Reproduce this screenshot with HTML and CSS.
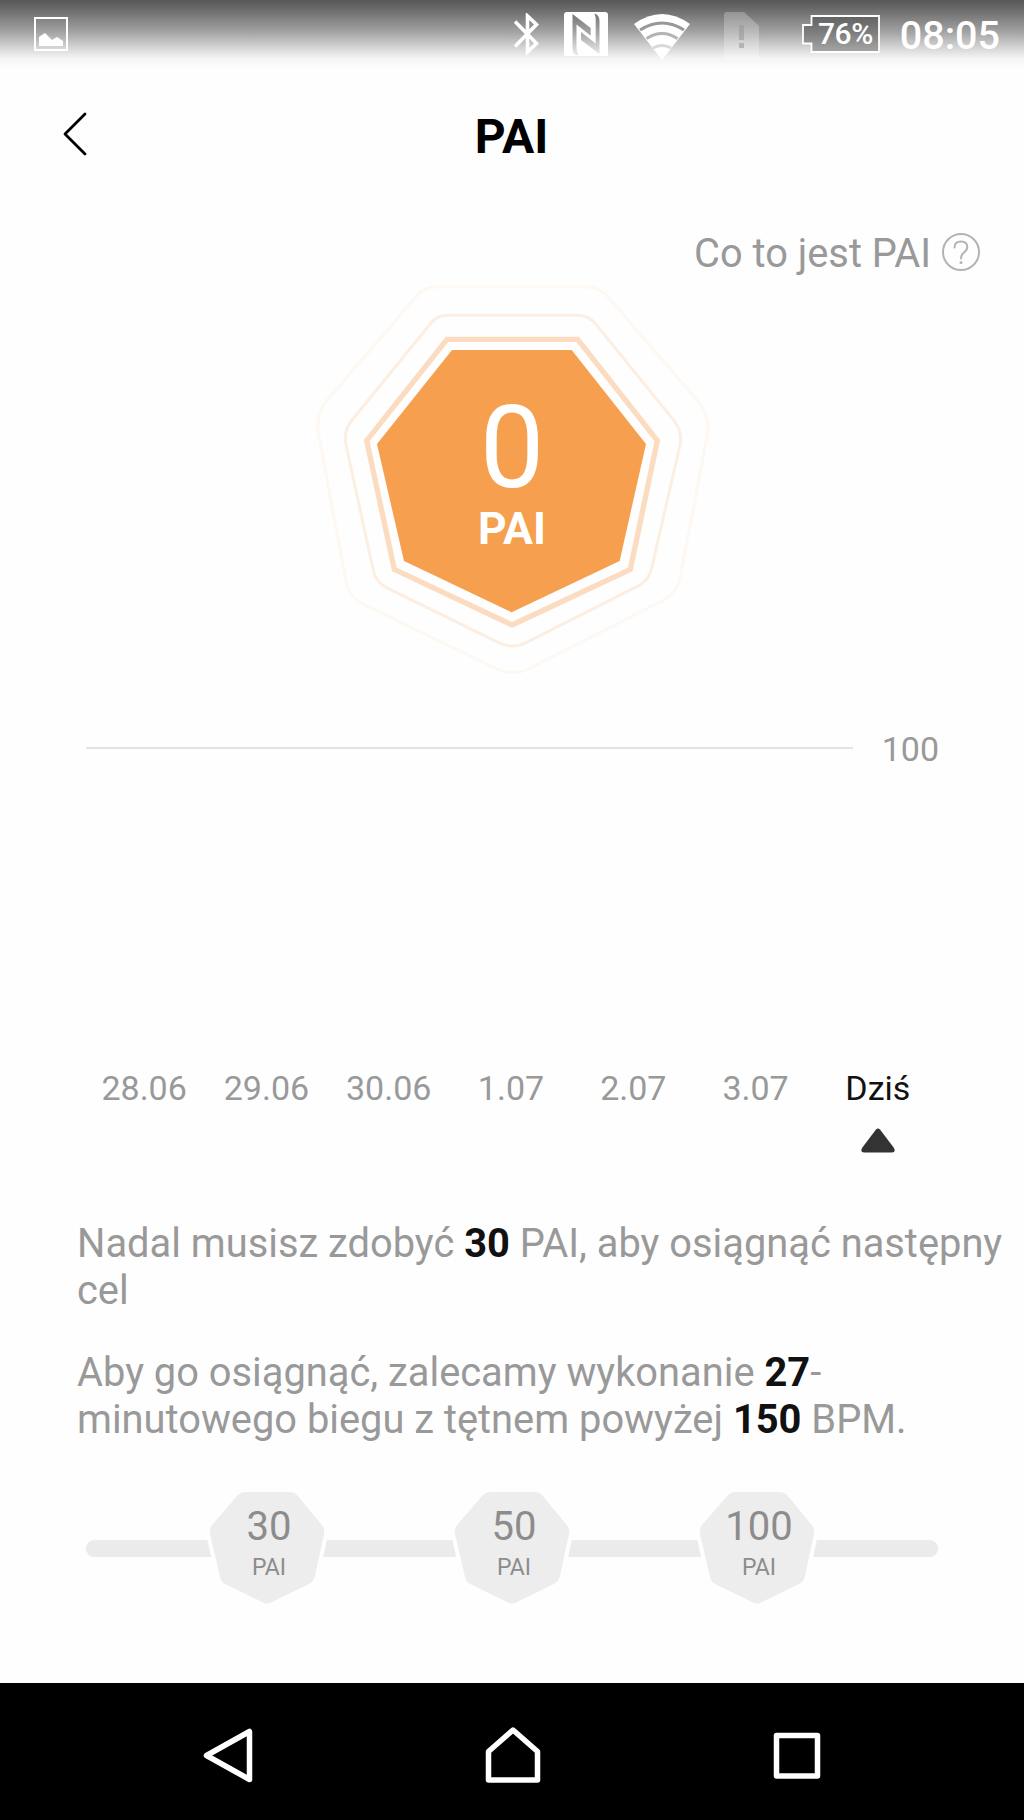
FILE: index.html
```
<!DOCTYPE html>
<html lang="pl">
<head>
    <meta charset="UTF-8">
    <meta name="viewport" content="width=device-width, initial-scale=1.0">
    <title>PAI</title>
    <link rel="stylesheet" href="styles.css">
</head>
<body>
    <div class="status-bar">
        <svg class="icon-picture" width="34" height="34" viewBox="0 0 34 34">
            <rect x="1" y="1" width="32" height="32" fill="none" stroke="#fff" stroke-width="2"/>
            <path d="M5 29V20L11 16L18 23L23 20L29 24V29Z" fill="#fff"/>
        </svg>
        <svg class="icon-bluetooth" width="26" height="42" viewBox="0 0 26 42">
            <path d="M1 8.500L22.500 30.500L13.500 39V3L22.500 11.500L1 33.500" fill="none" stroke="#fff" stroke-width="3.600"/>
        </svg>
        <svg class="icon-nfc" width="44" height="44" viewBox="0 0 44 44">
            <path fill="#fff" fill-rule="evenodd" d="M3 0H41Q44 0 44 3V44H0V3Q0 0 3 0ZM8.500 2L26.700 16V23.700L12.500 12.500V35Q12.500 41 15 43.500Q8.500 43.500 8.500 36ZM30.500 1.500Q35.500 3 35.500 9V42L17 28V20L31.700 31.500V8.500Q31.700 4 30.500 1.500Z"/>
        </svg>
        <svg class="icon-wifi" width="56" height="46" viewBox="0 0 56 46">
            <path d="M0 10Q28 -10 56 10L28 46Z" fill="#fff"/>
            <g fill="none" stroke-width="3">
                <path d="M6 16Q28 2 50 16" stroke="#989898"/>
                <path d="M12.500 24.500Q28 14.500 43.500 24.500" stroke="#b4b4b4"/>
                <path d="M19 34Q28 29 37 34" stroke="#d8d8d8"/>
            </g>
        </svg>
        <svg class="icon-sim" width="35" height="48" viewBox="0 0 35 48">
            <path d="M3 0H20L35 14V48H0V3Q0 0 3 0Z" fill="#fff" opacity=".25"/>
            <path d="M15 13H20V28H15ZM15 31H20V36H15Z" fill="#999" opacity=".6"/>
        </svg>
        <div class="battery">
            <svg class="battery-shape" width="78" height="38" viewBox="0 0 78 38">
                <path d="M9.500 1H77V37H9.500V28.500H1V10H9.500Z" fill="#333" fill-opacity=".35" stroke="#fff" stroke-width="1.800"/>
            </svg>
            <span class="battery-text">76%</span>
        </div>
        <span class="clock">08:05</span>
    </div>

    <header class="header">
        <svg class="back" width="24" height="44" viewBox="0 0 24 44">
            <path d="M22 2L2 22L22 42" fill="none" stroke="#000" stroke-width="2.800" stroke-linecap="round" stroke-linejoin="round"/>
        </svg>
        <h1>PAI</h1>
    </header>

    <div class="help">
        <span>Co to jest PAI</span>
        <svg width="40" height="40" viewBox="0 0 40 40" fill="none" stroke="#b3b3b3" stroke-width="2">
            <circle cx="20" cy="20" r="18"/>
            <path d="M13.500 15.500Q13.500 9.500 20 9.500Q26.300 9.500 26.300 15Q26.300 18 23 20.500Q20 23 20 26.500" stroke-linecap="round"/>
            <circle cx="20" cy="30.500" r="1.500" fill="#b3b3b3" stroke="none"/>
        </svg>
    </div>

    <div class="score">
        <svg class="score-shape" width="424" height="420" viewBox="0 0 1272 1260">
            <g fill="none">
                <path d="M410 51H860Q895 51 920 76L1195 395Q1230 435 1222 495L1140 925Q1133 965 1095 988L685 1197Q638 1220 591 1197L185 1000Q148 980 140 945L56 495Q46 435 80 392L350 78Q370 51 410 51Z" stroke="#fef8f2" stroke-width="9"/>
                <path d="M440 136H830Q866 136 886 161L1122 452Q1148 485 1140 525L1056 890Q1048 930 1018 946L680 1117Q637 1139 594 1117L258 952Q228 936 220 902L138 525Q129 485 154 453L388 165Q410 136 440 136Z" stroke="#fdeee2" stroke-width="9"/>
                <path d="M441 208H833L1072 512L991 898L636 1065L283 898L200 512Z" stroke="#fbdcc0" stroke-width="16"/>
            </g>
            <path d="M456 240H815L1038 522L959 873L635 1027L312 873L231 522Z" fill="#f6a04f"/>
        </svg>
        <div class="score-text">
            <span class="score-value">0</span>
            <span class="score-unit">PAI</span>
        </div>
    </div>

    <div class="chart">
        <div class="chart-line"></div>
        <span>100</span>
    </div>

    <div class="days">
        <span>28.06</span>
        <span>29.06</span>
        <span>30.06</span>
        <span>1.07</span>
        <span>2.07</span>
        <span>3.07</span>
        <div class="today">
            <span>Dziś</span>
            <svg width="34" height="25" viewBox="0 0 34 25">
                <path d="M15 1.500Q17 -0.500 19 1.500L33 20Q35 24.500 31 24.500H3Q-1 24.500 1 20Z" fill="#333"/>
            </svg>
        </div>
    </div>

    <div class="advice">
        <p>Nadal musisz zdobyć <b>30</b> PAI, aby osiągnąć następny cel</p>
        <p>Aby go osiągnąć, zalecamy wykonanie <b>27</b>-<br>minutowego biegu z tętnem powyżej <b>150</b> BPM.</p>
    </div>

    <div class="goals">
        <div class="goal">
            <svg class="goal-shape" width="126" height="124" viewBox="0 0 126 124">
                <path d="M42 6H85Q90 6 93 9L117 38Q121 42 120 48L111 90Q110 95 105 98L68 116Q63 119 58 116L21 98Q17 96 16 91L6 48Q5 43 8 39L33 10Q37 6 42 6Z"/>
            </svg>
            <span class="goal-value">30</span>
            <span class="goal-unit">PAI</span>
        </div>
        <div class="goal">
            <svg class="goal-shape" width="126" height="124" viewBox="0 0 126 124">
                <path d="M42 6H85Q90 6 93 9L117 38Q121 42 120 48L111 90Q110 95 105 98L68 116Q63 119 58 116L21 98Q17 96 16 91L6 48Q5 43 8 39L33 10Q37 6 42 6Z"/>
            </svg>
            <span class="goal-value">50</span>
            <span class="goal-unit">PAI</span>
        </div>
        <div class="goal">
            <svg class="goal-shape" width="126" height="124" viewBox="0 0 126 124">
                <path d="M42 6H85Q90 6 93 9L117 38Q121 42 120 48L111 90Q110 95 105 98L68 116Q63 119 58 116L21 98Q17 96 16 91L6 48Q5 43 8 39L33 10Q37 6 42 6Z"/>
            </svg>
            <span class="goal-value">100</span>
            <span class="goal-unit">PAI</span>
        </div>
    </div>

    <nav class="nav-bar">
        <svg width="56" height="60" viewBox="0 0 56 60">
            <path d="M49.500 7.500V55.500L6.500 31.500Z"/>
        </svg>
        <svg width="60" height="60" viewBox="0 0 60 60">
            <path d="M5.500 56V27.500L30 6L54.500 27.500V56Z"/>
        </svg>
        <svg width="56" height="60" viewBox="0 0 56 60">
            <rect x="7.500" y="11.500" width="41" height="40.500"/>
        </svg>
    </nav>
</body>
</html>
```
FILE: styles.css
```
* {
    box-sizing: border-box;
}

body {
    margin: 0;
    height: 1820px;
    display: flex;
    flex-direction: column;
    background-color: #fefefe;
    font-family: Roboto, "Liberation Sans", sans-serif;
    color: #999;
    overflow: hidden;
}

svg {
    display: block;
    flex-shrink: 0;
}

/* Status bar */
.status-bar {
    height: 90px;
    padding: 12px 24px 0 34px;
    display: flex;
    align-items: flex-start;
    background: linear-gradient(#595959 0, #5f5f5f 4px, #808080 18px, #a3a3a3 32px, #d0d0d0 46px, #f3f3f3 58px, #fefefe 69px);
    color: #fff;
    font-weight: 500;
}

.icon-picture {
    margin-top: 5px;
}

.icon-bluetooth {
    margin: 1px 0 0 446px;
}

.icon-nfc {
    margin-left: 24px;
}

.icon-wifi {
    margin: 2px 0 0 26px;
}

.icon-sim {
    margin-left: 34px;
}

.battery {
    position: relative;
    width: 78px;
    height: 38px;
    margin: 3px 0 0 43px;
    padding-left: 10px;
    text-align: center;
    font-size: 30px;
    line-height: 38px;
}

.battery-shape {
    position: absolute;
    left: 0;
    top: 0;
}

.battery-text {
    position: relative;
    letter-spacing: -0.5px;
}

.clock {
    margin-left: 21px;
    font-size: 39.500px;
    line-height: 48px;
}

/* Header */
.header {
    height: 90px;
    padding: 22px 64px 0 63px;
    display: grid;
    grid-template-columns: 24px 1fr 24px;
    align-items: start;
}

h1 {
    margin: 0;
    text-align: center;
    color: #000;
    font-size: 48px;
    line-height: 50px;
    font-weight: 700;
}

.help {
    height: 90px;
    padding: 50px 43px 0 0;
    display: flex;
    justify-content: flex-end;
    gap: 10px;
    font-size: 39.800px;
    line-height: 48px;
}

.help svg {
    margin-top: 2px;
}

/* Score heptagon */
.score {
    width: 424px;
    height: 420px;
    margin: 0 auto;
    display: grid;
}

.score-shape,
.score-text {
    grid-area: 1 / 1;
}

.score-text {
    padding-top: 116px;
    display: flex;
    flex-direction: column;
    align-items: center;
    color: #fff;
}

.score-value {
    font-size: 115px;
    line-height: 124px;
}

.score-unit {
    margin-top: -7px;
    font-size: 44.500px;
    line-height: 52px;
    font-weight: 700;
}

/* Week chart */
.chart {
    height: 372px;
    padding: 38px 85px 0 86px;
    display: flex;
    justify-content: space-between;
    font-size: 34px;
    line-height: 42px;
}

.chart-line {
    width: 767px;
    height: 2px;
    margin-top: 19px;
    background-color: #e4e4e4;
}

.days {
    height: 158px;
    padding: 6px 85px 0 83px;
    display: grid;
    grid-template-columns: repeat(7, 1fr);
    text-align: center;
    font-size: 34px;
    line-height: 40px;
}

.today {
    display: flex;
    flex-direction: column;
    align-items: center;
    gap: 20px;
    color: #111;
}

/* Advice */
.advice {
    height: 272px;
    padding: 1px 0 0 77px;
    font-size: 39.850px;
    line-height: 46.500px;
}

.advice p {
    margin: 0 0 36px;
}

.advice b {
    color: #111;
}

/* Goals */
.goals {
    height: 191px;
    margin: 0 86px;
    padding: 0 118px;
    display: flex;
    justify-content: space-between;
    background: linear-gradient(#ebebeb, #ebebeb) 10px 48px / 832px 17px no-repeat,
        radial-gradient(circle at 8.500px 56.500px, #ebebeb 8px, transparent 9px),
        radial-gradient(circle at 843.500px 56.500px, #ebebeb 8px, transparent 9px);
}

.goal {
    width: 126px;
    height: 124px;
    display: grid;
    grid-template-rows: 55px 69px;
    justify-items: center;
    margin-top: -6px;
}

.goal-shape {
    grid-area: 1 / 1 / 3 / 2;
    fill: #ededed;
    stroke: #fefefe;
    stroke-width: 8px;
    paint-order: stroke;
}

.goal-value {
    grid-area: 1 / 1;
    padding: 17px 0 0 4px;
    color: #8c8c8c;
    font-size: 40px;
    line-height: 48px;
}

.goal-unit {
    grid-area: 2 / 1;
    padding: 13px 0 0 4px;
    color: #8c8c8c;
    font-size: 23px;
    line-height: 28px;
}

/* Navigation */
.nav-bar {
    height: 137px;
    padding: 41px 199px 0 200px;
    display: flex;
    justify-content: space-between;
    background-color: #000;
}

.nav-bar svg {
    fill: none;
    stroke: #fff;
    stroke-width: 5.500px;
    stroke-linejoin: round;
}
```
